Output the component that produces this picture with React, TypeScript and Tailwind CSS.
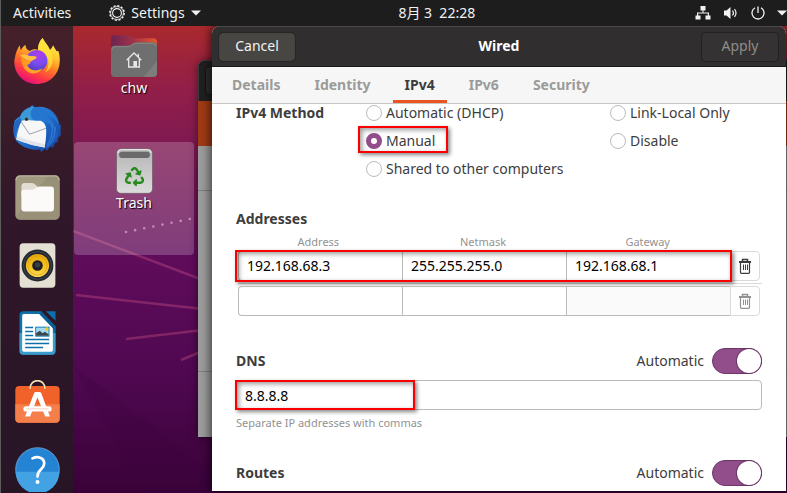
import type { ReactNode } from "react";
import { FaRecycle } from "react-icons/fa";

function FirefoxIcon() {
  return (
    <svg viewBox="0 0 138 138" className="size-[46px]" aria-label="Firefox">
      <defs>
        <linearGradient id="ff-body" x1="0.8" y1="0.05" x2="0.35" y2="1">
          <stop offset="0" stopColor="#fff24a" />
          <stop offset="0.3" stopColor="#ffc52e" />
          <stop offset="0.55" stopColor="#ff7a26" />
          <stop offset="0.78" stopColor="#ff3a45" />
          <stop offset="1" stopColor="#e4107a" />
        </linearGradient>
        <radialGradient id="ff-globe" cx="0.6" cy="0.2" r="0.9">
          <stop offset="0" stopColor="#b03be8" />
          <stop offset="0.5" stopColor="#7a4df0" />
          <stop offset="1" stopColor="#4a3ab0" />
        </radialGradient>
        <linearGradient id="ff-fox" x1="0" y1="0" x2="1" y2="1">
          <stop offset="0" stopColor="#ff8a1e" />
          <stop offset="1" stopColor="#ffb02c" />
        </linearGradient>
      </defs>
      <path d="M3 58C5 44 10 33 17 22L20 37C24 30 28 25 34 20C35 29 39 36 47 39C56 32 66 33 72 35C72 20 77 8 86 0C90 11 101 19 108 36C111 33 115 28 117 22C122 30 125 35 128 40L133 39C137 50 138 62 137 72C135 111 105 138 68 138C30 138 1 109 1 72C1 66 2 62 3 58Z" fill="url(#ff-body)" />
      <path d="M86 0C90 11 101 19 108 36C121 60 118 92 92 104C108 88 107 60 90 46C78 39 70 30 72 35C72 20 77 8 86 0Z" fill="#ffe43e" opacity="0.75" />
      <circle cx="68" cy="68" r="32" fill="url(#ff-globe)" />
      <path d="M18 52C28 48 38 50 45 54C54 53 62 54 68 57C66 64 58 65 53 68C47 73 50 79 40 80C44 96 66 103 85 91C75 110 45 112 31 92C24 82 22 65 18 52Z" fill="url(#ff-fox)" />
      <path d="M18 52C28 48 38 50 45 54C54 53 62 54 68 57C66 64 58 65 53 68C40 70 30 60 18 52Z" fill="#ffc044" />
    </svg>
  );
}

function ThunderbirdIcon() {
  return (
    <svg viewBox="0 0 146 144" className="h-12 w-[48px]" aria-label="Thunderbird">
      <defs>
        <linearGradient id="tb-body" x1="0" y1="0" x2="1" y2="1">
          <stop offset="0" stopColor="#3aa4ea" />
          <stop offset="0.5" stopColor="#1f70cc" />
          <stop offset="1" stopColor="#163a94" />
        </linearGradient>
      </defs>
      <path d="M4 50C0 78 2 104 18 116C34 130 60 138 82 134L86 142L98 132L104 138L112 126L122 128L128 114L136 112L138 98L145 92L145 58L141 60C138 28 114 4 80 4L66 6L58 0L52 6C36 10 26 22 22 34C14 38 7 42 4 50Z" fill="url(#tb-body)" />
      <path d="M66 6C100 2 132 24 141 60C126 36 108 26 90 26C112 36 126 54 132 84C118 58 104 48 84 46C74 46 66 48 60 48C44 44 44 30 52 18Z" fill="#2476ce" />
      <path d="M22 34C28 18 44 8 62 6C50 20 52 36 64 47L28 54C20 48 18 42 22 34Z" fill="#3b98da" />
      <path d="M26 47C36 43 60 47 84 47C96 52 101 62 101 78C101 98 99 114 96 128C66 124 34 114 10 104C13 84 18 64 26 47Z" fill="#f7f7f8" />
      <path d="M10 104C34 114 66 124 96 128L97 118C80 116 40 104 13 94Z" fill="#e0e3ea" />
      <path d="M25 50L50 88L100 70" fill="none" stroke="#98a0ac" strokeWidth="3" />
      <path d="M101 58C112 74 112 104 98 132C120 122 134 104 138 84" fill="#1e5dbd" />
      <path d="M128 66C128 92 120 110 104 126M118 60C122 84 116 104 103 120" fill="none" stroke="#3b92e4" strokeWidth="3" opacity="0.7" />
      <path d="M4 50C0 68 0 86 6 100C10 82 16 64 26 48L22 38Z" fill="#2465bf" />
      <circle cx="41" cy="42" r="6" fill="#7e8a5e" />
      <circle cx="41" cy="42" r="4" fill="#1c2630" />
    </svg>
  );
}

function FilesIcon() {
  return (
    <svg viewBox="0 0 134 134" className="size-[45px]" aria-label="Files">
      <rect x="1" y="1" width="132" height="132" rx="14" fill="#a29981" />
      <path d="M100 1H119Q133 1 133 15V119Q133 133 119 133H15Q5 133 2 124Z" fill="#958c75" opacity="0.7" />
      <path d="M3 16Q3 3 16 3H118Q131 3 131 16" fill="none" stroke="#bcb5a1" strokeWidth="3" />
      <path d="M19 34Q19 24 29 24H50Q57 24 62 30L68 36V60H19Z" fill="#e2ddd2" />
      <path d="M19 52Q19 44 28 44H52Q58 44 62 39Q66 34 74 34H107Q116 34 116 43V100Q116 109 107 109H28Q19 109 19 100Z" fill="#fbfaf8" />
    </svg>
  );
}

function MusicIcon() {
  return (
    <svg viewBox="0 0 110 136" className="h-[45px] w-[37px]" aria-label="Rhythmbox">
      <defs>
        <linearGradient id="cone" x1="0" y1="0" x2="0" y2="1">
          <stop offset="0" stopColor="#e5a90b" />
          <stop offset="0.55" stopColor="#f5c320" />
          <stop offset="1" stopColor="#fbd95a" />
        </linearGradient>
      </defs>
      <rect x="1" y="1" width="108" height="134" rx="11" fill="#e4dfd3" />
      <circle cx="55" cy="68" r="48" fill="#25282f" />
      <circle cx="55" cy="68" r="42" fill="none" stroke="#3d4653" strokeWidth="3" />
      <circle cx="55" cy="68" r="35" fill="url(#cone)" />
      <circle cx="55" cy="68" r="29" fill="none" stroke="#d79b06" strokeWidth="2" />
      <circle cx="55" cy="68" r="16" fill="#1d1f24" />
      <circle cx="55" cy="66" r="8" fill="#3b3e45" />
    </svg>
  );
}

function WriterIcon() {
  return (
    <svg viewBox="0 0 110 132" className="h-11 w-[37px]" aria-label="LibreOffice Writer">
      <path d="M12 1H66L109 46V120Q109 131 98 131H12Q1 131 1 120V12Q1 1 12 1Z" fill="#0e70a8" />
      <path d="M1 66H109V120Q109 131 98 131H12Q1 131 1 120Z" fill="#3c9cc9" />
      <path d="M14 9H62L101 50V117Q101 122 96 122H14Q9 122 9 117V14Q9 9 14 9Z" fill="#fff" />
      <path d="M80 1H109V29Z" fill="#0e70a8" />
      <path d="M66 1L109 46V60L60 9Z" fill="#0a5f92" />
      <path d="M18 47H42V52H18ZM18 59H42V64H18ZM18 71H42V76H18ZM18 83H90V88H18ZM18 95H90V100H18ZM18 107H72V112H18Z" fill="#0e70a8" />
      <rect x="48" y="47" width="43" height="30" fill="#1580bd" />
      <rect x="51" y="50" width="37" height="24" fill="#a6d9f2" />
      <path d="M51 74V66L62 59L70 67L77 62L88 70V74Z" fill="#3b474d" />
      <circle cx="83" cy="54" r="5" fill="#f8c818" />
    </svg>
  );
}

function SoftwareIcon() {
  return (
    <svg viewBox="0 0 134 128" className="h-[43px] w-[45px]" aria-label="Ubuntu Software">
      <rect x="1" y="18" width="132" height="109" rx="12" fill="#f0622a" />
      <path d="M1 72H133V115Q133 127 121 127H13Q1 127 1 115Z" fill="#f47f4b" />
      <path d="M45 26C45-6 89-6 89 26" fill="none" stroke="#f5e3b5" strokeWidth="5" />
      <path d="M30 109L57 39Q59 36 62 36H73Q76 36 78 39L104 109H90L67 52L45 109Z" fill="#fff" />
      <rect x="25" y="78" width="84" height="16" rx="8" fill="#fff" />
      <path d="M34 86H100" stroke="#f6b79b" strokeWidth="2" />
    </svg>
  );
}

function HelpIcon() {
  return (
    <svg viewBox="0 0 134 134" className="size-[45px]" aria-label="Help">
      <circle cx="67" cy="67" r="65" fill="#2583d4" stroke="#7cc0f0" strokeWidth="2" />
      <path d="M2 74H132A65 65 0 0 1 2 74Z" fill="#42a2e4" />
      <path d="M52 34C66 27 87 30 87 49C87 67 66 66 67 88" fill="none" stroke="#fff" strokeWidth="8" strokeLinecap="round" />
      <circle cx="67" cy="104" r="6" fill="#fff" />
    </svg>
  );
}

function HomeFolderIcon() {
  return (
    <svg viewBox="0 0 138 126" className="h-[42px] w-[46px]" aria-hidden="true">
      <defs>
        <linearGradient id="folder-tab" x1="0" y1="0" x2="1" y2="0">
          <stop offset="0" stopColor="#6b2450" />
          <stop offset="0.5" stopColor="#a3324a" />
          <stop offset="1" stopColor="#e8572a" />
        </linearGradient>
      </defs>
      <path d="M0 12Q0 1 11 1H50Q56 1 60 6Q64 10 70 10H126Q138 10 138 22V60H0Z" fill="url(#folder-tab)" />
      <path d="M0 43Q0 32 11 32H50Q58 32 63 27Q68 22 76 22H127Q138 22 138 33V114Q138 126 126 126H12Q0 126 0 114Z" fill="#6f6f6f" />
      <path d="M138 78V114Q138 126 126 126H98Z" fill="#7d7d7d" />
      <path d="M3 44Q3 35 12 35H50Q60 35 65 29Q69 25 77 25H126Q135 25 135 34" fill="none" stroke="#878787" strokeWidth="3" />
      <path d="M47 76L69 54L91 76M53 72V96H85V72M82 56V66" fill="none" stroke="#e6e6e6" strokeWidth="4" />
      <rect x="67" y="78" width="11" height="17" fill="#e6e6e6" />
    </svg>
  );
}

function TrashBinIcon() {
  return (
    <svg viewBox="0 0 110 138" className="h-[46px] w-[37px]" aria-hidden="true">
      <defs>
        <linearGradient id="bin" x1="0" y1="0" x2="0" y2="1">
          <stop offset="0" stopColor="#b4b4b4" />
          <stop offset="1" stopColor="#dcdcdc" />
        </linearGradient>
      </defs>
      <rect x="1" y="2" width="108" height="134" rx="13" fill="url(#bin)" stroke="#6d5868" strokeWidth="2" />
      <path d="M5 15Q5 5 15 5H95Q105 5 105 15" fill="none" stroke="#f0f0f0" strokeWidth="3" />
      <rect x="9" y="11" width="92" height="19" rx="8" fill="#6a6a6a" />
      <FaRecycle x="26" y="57" size={58} color="#2a8a22" />
    </svg>
  );
}

function DeleteIcon() {
  return (
    <svg viewBox="0 0 14 16" className="h-4 w-3.5" fill="none" stroke="currentColor" aria-hidden="true">
      <path d="M1 4H13" strokeWidth="2" />
      <path d="M4.5 3.5V1.5H9.5V3.5" strokeWidth="1.5" />
      <path d="M2.5 5V14.5Q2.5 15.3 3.3 15.3H10.7Q11.5 15.3 11.5 14.5V5" strokeWidth="1.2" />
      <path d="M5.5 6.5V12M7.5 6.5V12M9.5 6.5V12" strokeWidth="1" />
    </svg>
  );
}

function GearIcon() {
  return (
    <svg viewBox="0 0 16 16" className="size-4" fill="none" stroke="#f2f2f2" aria-hidden="true">
      <circle cx="8" cy="8" r="7.2" strokeWidth="1.4" strokeDasharray="2.2 1.57" />
      <circle cx="8" cy="8" r="6.4" strokeWidth="0.8" />
      <circle cx="8" cy="8" r="4.4" strokeWidth="1.1" />
    </svg>
  );
}

function Caret() {
  return (
    <svg viewBox="0 0 10 6" className="h-1.5 w-2.5 shrink-0" fill="#f2f2f2" aria-hidden="true">
      <path d="M0 0.5H10L5 5.5Z" />
    </svg>
  );
}

function TopBar() {
  return (
    <header className="flex h-[26px] shrink-0 items-center justify-between bg-[#1d1d1d] pl-3 text-sm text-[#f2f2f2]">
      <div className="flex items-center gap-[38px]">
        <button>Activities</button>
        <button className="flex items-center gap-1.5">
          <GearIcon />
          Settings
          <Caret />
        </button>
      </div>
      <button className="mr-[22px] whitespace-pre">8月 3  22:28</button>
      <button className="flex items-center gap-3" aria-label="System menu">
        <svg viewBox="0 0 16 14" className="h-3.5 w-4" fill="#f2f2f2" aria-hidden="true">
          <path d="M5.5 0H10.5V4.5H8.5V6.5H14V9.5H15.5V13.5H10.5V9.5H12.8V7.6H3.2V9.5H5.5V13.5H0.5V9.5H2V6.5H7.5V4.5H5.5Z" />
        </svg>
        <svg viewBox="0 0 16 14" className="h-3.5 w-4" fill="#f2f2f2" aria-hidden="true">
          <path d="M1 4.5H3.5L7.5 1V13L3.5 9.5H1Z" />
          <path d="M9.5 4.5Q11.5 7 9.5 9.5M11.5 3Q14.5 7 11.5 11" fill="none" stroke="#f2f2f2" strokeWidth="1.2" />
        </svg>
        <svg viewBox="0 0 14 14" className="size-3.5" fill="none" stroke="#f2f2f2" strokeWidth="1.3" aria-hidden="true">
          <path d="M4 1.8A6 6 0 1 0 10 1.8M7 0.5V7" />
        </svg>
        <Caret />
      </button>
    </header>
  );
}

function Dock() {
  const apps = [FirefoxIcon, ThunderbirdIcon, FilesIcon, MusicIcon, WriterIcon, SoftwareIcon, HelpIcon];
  return (
    <nav className="flex w-[72px] shrink-0 flex-col overflow-hidden bg-linear-to-b from-[#45202a] via-[#301729] via-40% to-[#271526] pt-px">
      {apps.map((Icon, i) => (
        <button key={i} className="flex h-[68px] shrink-0 items-center justify-center">
          <Icon />
        </button>
      ))}
    </nav>
  );
}

function Wallpaper() {
  return (
    <svg className="absolute inset-0 size-full" viewBox="0 0 714 467" preserveAspectRatio="xMinYMin slice" aria-hidden="true">
      <defs>
        <linearGradient id="sky" x1="0" y1="0" x2="0" y2="1">
          <stop offset="0" stopColor="#a9292d" />
          <stop offset="0.13" stopColor="#931f48" />
          <stop offset="0.27" stopColor="#7c1853" />
          <stop offset="0.5" stopColor="#5f0c5b" />
          <stop offset="0.75" stopColor="#4f0850" />
          <stop offset="1" stopColor="#3a0238" />
        </linearGradient>
      </defs>
      <rect width="714" height="467" fill="url(#sky)" />
      <g stroke="#c04a80" strokeWidth="2.5" opacity="0.42">
        <path d="M0 205L130 254" />
        <path d="M3 269L130 283" />
        <path d="M53 313L130 304" />
        <path d="M108 334L130 325" />
      </g>
      <path d="M0 340L70 467H160L130 440L40 370Z" fill="#3a0540" opacity="0.25" />
      <path d="M53 206L122 192" stroke="#c98ab4" strokeWidth="2.6" strokeLinecap="round" strokeDasharray="0 9.3" opacity="0.8" />
    </svg>
  );
}

function DesktopItem({ label, selected, children }: { label: string; selected?: boolean; children: ReactNode }) {
  return (
    <button
      className={`flex h-[113px] w-[120px] flex-col items-center rounded pt-1.5 text-sm leading-[18px] text-white [text-shadow:1px_1px_1px_#000] ${
        selected ? "bg-white/20" : ""
      }`}
    >
      <span className="flex h-[46px] items-center">{children}</span>
      <span>{label}</span>
    </button>
  );
}

function SettingsWindow() {
  return (
    <div className="absolute top-[34px] right-0 bottom-14 left-[125px] flex flex-col overflow-hidden rounded-tl-lg bg-[#9c9c9c] shadow-[0_0_8px_#0008]">
      <div className="h-[41px] border-t border-l border-[#3c3a3a] bg-[#211f20] px-1.5 py-[5px]">
        <div className="h-[29px] w-20 rounded border border-[#161515] bg-[#2d2b2b]" />
      </div>
      <div className="h-[45px] bg-[#a03a15]" />
      <div className="h-[45px] border-b border-[#7d7d7d]" />
      <div className="h-[181px] border-b border-[#7d7d7d]" />
    </div>
  );
}

function Tab({ label, active }: { label: string; active?: boolean }) {
  return (
    <button
      role="tab"
      aria-selected={!!active}
      className={`border-b-[3px] px-3 pt-[3px] text-sm font-bold ${
        active ? "border-[#e95420] text-[#3d3d3d]" : "border-transparent text-[#9b9b9a]"
      }`}
    >
      {label}
    </button>
  );
}

function Highlight({ className }: { className: string }) {
  return (
    <span
      className={`pointer-events-none absolute border-2 border-[#fb0000] shadow-[2px_2px_4px_#0007,inset_2px_2px_5px_#0006] ${className}`}
    />
  );
}

function Method({ label, checked, marked }: { label: string; checked?: boolean; marked?: boolean }) {
  return (
    <label className="relative flex h-[18px] items-center gap-1 justify-self-start whitespace-nowrap">
      <input
        type="radio"
        name="method"
        defaultChecked={checked}
        className="size-4 appearance-none rounded-full border border-[#bdbbb9] bg-white checked:border-[5px] checked:border-[#924d8b]"
      />
      {label}
      {marked && <Highlight className="-top-1.5 -right-[13px] -bottom-[3px] -left-2" />}
    </label>
  );
}

function Switch({ id }: { id: string }) {
  return (
    <input
      id={id}
      type="checkbox"
      role="switch"
      defaultChecked
      className="h-[26px] w-[50px] appearance-none rounded-full border border-[#6c3566] bg-[#c4c0bd] before:block before:size-6 before:rounded-full before:bg-white before:shadow-[0_0_0_1px_#6c3566] checked:bg-[#924d8b] checked:before:translate-x-6"
    />
  );
}

function SectionTitle({ id, title }: { id: string; title: string }) {
  return (
    <div className="flex h-[26px] items-center">
      <h2 className="flex-1 font-bold">{title}</h2>
      <label htmlFor={id} className="mr-2">
        Automatic
      </label>
      <Switch id={id} />
    </div>
  );
}

const columns = ["Address", "Netmask", "Gateway"];

function AddressRow({ values, empty }: { values: string[]; empty?: boolean }) {
  return (
    <div className="relative mx-0.5 grid h-[30px] grid-cols-[1fr_1fr_1fr_30px]">
      {values.map((value, i) => (
        <input
          key={i}
          id={empty ? undefined : columns[i]}
          aria-label={columns[i]}
          defaultValue={value}
          disabled={empty && i === 2}
          className="min-w-0 border border-r-0 border-[#bdbbb9] px-2 text-black first:rounded-l disabled:bg-[#fafafa]"
        />
      ))}
      <button
        aria-label="Delete address"
        disabled={empty}
        className="flex items-center justify-center rounded-r border border-[#dcdad8] text-[#3d3d3d] disabled:text-[#929292]"
      >
        <DeleteIcon />
      </button>
      {!empty && <Highlight className="-top-px -bottom-px right-7 -left-[3px]" />}
    </div>
  );
}

function WiredDialog() {
  return (
    <div
      role="dialog"
      aria-label="Wired"
      className="absolute top-0 right-px bottom-0.5 left-[139px] flex flex-col overflow-hidden rounded-t-lg bg-white text-sm text-[#3d3d3d] shadow-[0_0_10px_2px_#0009]"
    >
      <div className="grid h-[41px] shrink-0 grid-cols-[1fr_auto_1fr] items-center border-t border-b border-t-[#4a4848] border-b-[#1a1919] bg-[#302e2e] px-[7px]">
        <button className="h-7 w-19 justify-self-start rounded border border-[#454340] bg-[#484643] pb-0.5 text-[#f2f2f2] shadow-[0_0_0_1px_#272525]">
          Cancel
        </button>
        <h1 className="pb-0.5 font-bold text-white">Wired</h1>
        <button disabled className="h-[30px] w-[78px] justify-self-end rounded border border-[#232121] bg-[#343232] pb-0.5 text-[#8f8d8b]">
          Apply
        </button>
      </div>
      <div role="tablist" className="flex h-[37px] shrink-0 gap-2.5 border-b border-[#c9c7c5] bg-[#f6f6f6] pl-2">
        <Tab label="Details" />
        <Tab label="Identity" />
        <Tab label="IPv4" active />
        <Tab label="IPv6" />
        <Tab label="Security" />
      </div>
      <div className="min-h-0 flex-1 overflow-hidden px-6">
        <div className="grid grid-cols-[130px_244px_1fr] gap-y-2.5">
          <h2 className="h-[18px] leading-[18px] font-bold">IPv4 Method</h2>
          <Method label="Automatic (DHCP)" />
          <Method label="Link-Local Only" />
          <div className="col-start-2 flex">
            <Method label="Manual" checked marked />
          </div>
          <Method label="Disable" />
          <div className="col-start-2">
            <Method label="Shared to other computers" />
          </div>
        </div>
        <h2 className="mt-[31px] leading-5 font-bold">Addresses</h2>
        <div className="mt-1 mr-8 grid grid-cols-3 text-center text-[11px] leading-[18px] text-[#929292]">
          {columns.map((name) => (
            <label key={name} htmlFor={name}>
              {name}
            </label>
          ))}
        </div>
        <AddressRow values={["192.168.68.3", "255.255.255.0", "192.168.68.1"]} />
        <hr className="my-0.5 ml-0.5 border-[#dcdad8]" />
        <AddressRow values={["", "", ""]} empty />
        <div className="mt-8">
          <SectionTitle id="dns-auto" title="DNS" />
        </div>
        <div className="relative mt-1.5">
          <input
            aria-label="DNS"
            defaultValue="8.8.8.8"
            className="block h-[30px] w-full rounded border border-[#bdbbb9] px-2 text-black"
          />
          <Highlight className="inset-y-0 -left-px w-[180px]" />
        </div>
        <p className="mt-1 mb-7 text-[11px] leading-[18px] text-[#929292]">Separate IP addresses with commas</p>
        <SectionTitle id="routes-auto" title="Routes" />
      </div>
    </div>
  );
}

export default function App() {
  return (
    <div className="flex h-screen w-full flex-col overflow-hidden border-l border-[#5c5c5c] bg-[#3a0238] font-['Noto_Sans','Noto_Sans_CJK_SC',sans-serif]">
      <TopBar />
      <div className="flex min-h-0 flex-1">
        <Dock />
        <main className="relative min-w-0 flex-1 overflow-hidden">
          <Wallpaper />
          <div className="relative flex flex-col gap-0.5 pt-px pl-px">
            <DesktopItem label="chw">
              <HomeFolderIcon />
            </DesktopItem>
            <DesktopItem label="Trash" selected>
              <TrashBinIcon />
            </DesktopItem>
          </div>
          <SettingsWindow />
          <WiredDialog />
        </main>
      </div>
    </div>
  );
}
